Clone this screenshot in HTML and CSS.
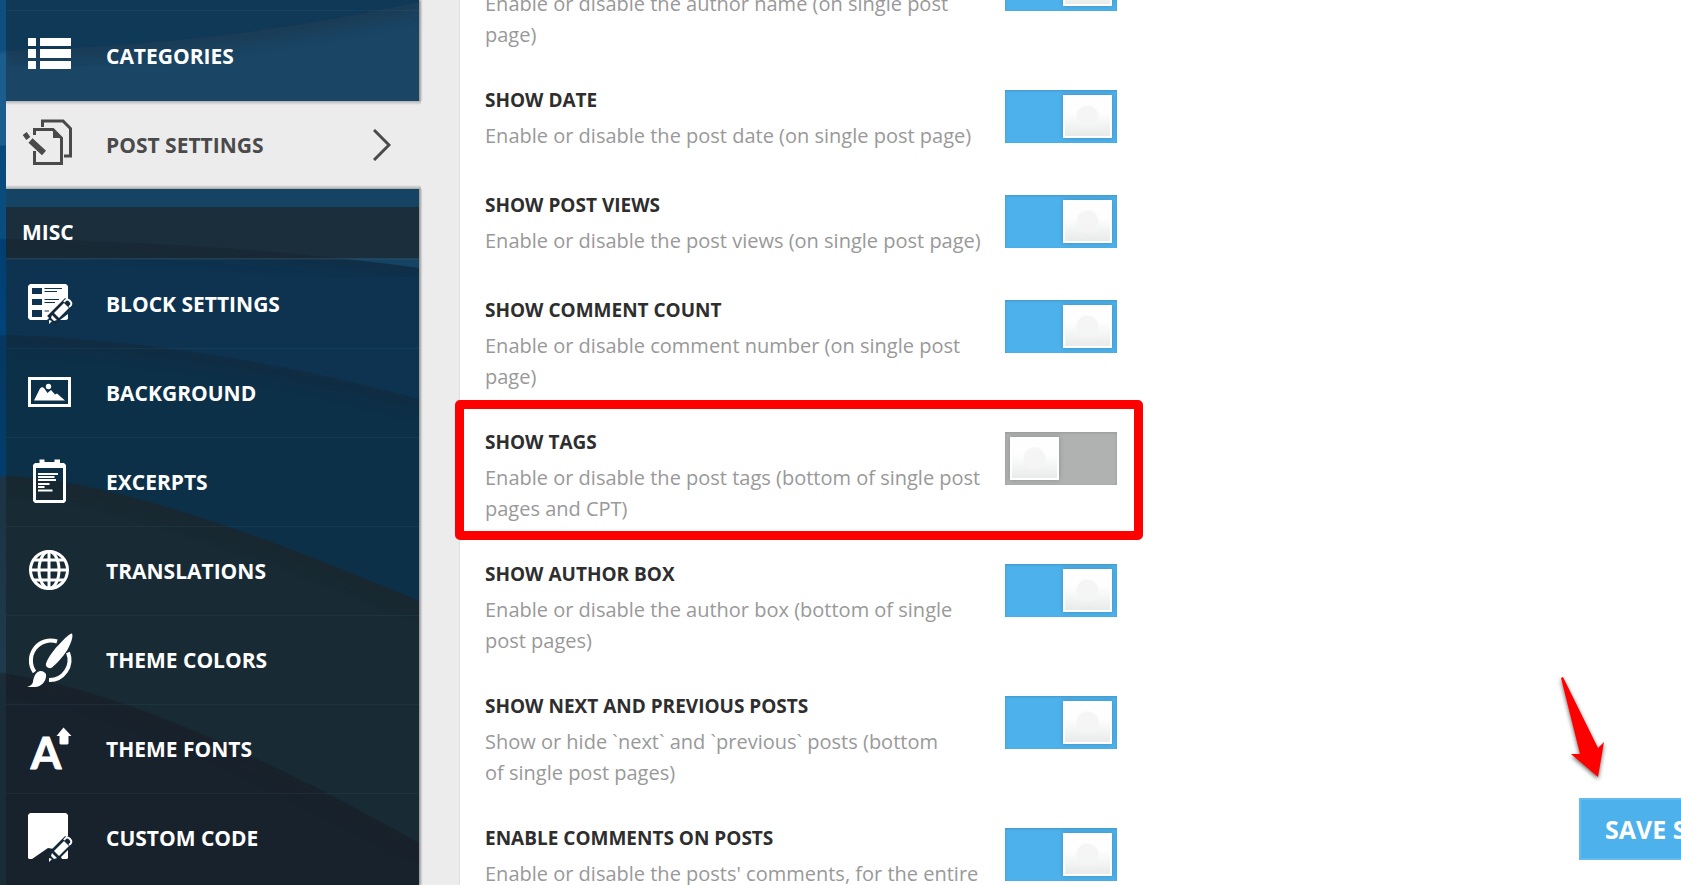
FILE: index.html
```html
<!DOCTYPE html>
<html lang="en">
<head>
    <meta charset="UTF-8">
    <meta name="viewport" content="width=device-width, initial-scale=1.0">
    <title>Theme Panel - Post Settings</title>
    <link rel="stylesheet" href="styles.css">
</head>
<body>
    <svg class="symbols" aria-hidden="true">
        <symbol id="pencil" viewBox="0 0 26 26">
            <path class="pencil-edge" d="M4 22L22 4" />
            <path d="M7 15L17 5l5 5L12 20z" />
            <path d="M5 17l5 5-3 1-3-3zM2 22l3 1-3 3z" />
            <path class="pencil-end" d="M17 4c2-3 4-3 6-1s2 4-1 6" />
        </symbol>
    </svg>

    <div class="container">
        <aside class="sidebar">
            <svg class="waves" viewBox="0 0 413 885" preserveAspectRatio="none" aria-hidden="true">
                <defs>
                    <filter id="soft" x="-10%" y="-30%" width="120%" height="160%"><feGaussianBlur stdDeviation="8" /></filter>
                    <clipPath id="c1"><path d="M0 51Q220 45 413 2V240H0z" /></clipPath>
                    <clipPath id="c2"><path d="M0 239Q220 242 413 268V885H0z" /></clipPath>
                    <clipPath id="c3"><path d="M0 335Q200 342 413 399V885H0z" /></clipPath>
                    <clipPath id="c4"><path d="M0 476Q130 480 413 601V885H0z" /></clipPath>
                    <clipPath id="c5"><path d="M0 674Q150 695 413 843V885H0z" /></clipPath>
                </defs>
                <rect width="413" height="885" fill="#103857" />
                <g clip-path="url(#c1)">
                    <rect width="413" height="885" fill="#1a4564" />
                    <path class="wave-shade" d="M0 51Q220 45 413 2" />
                </g>
                <rect y="188" width="413" height="90" fill="#144364" />
                <g clip-path="url(#c2)">
                    <rect width="413" height="885" fill="#0d3350" />
                    <path class="wave-shade" d="M0 239Q220 242 413 268" />
                </g>
                <g clip-path="url(#c3)">
                    <rect width="413" height="885" fill="#0d3049" />
                    <path class="wave-shade" d="M0 335Q200 342 413 399" />
                </g>
                <g clip-path="url(#c4)">
                    <rect width="413" height="885" fill="#182a33" />
                    <path class="wave-shade" d="M0 476Q130 480 413 601" />
                </g>
                <g clip-path="url(#c5)">
                    <rect width="413" height="885" fill="#18222c" />
                    <path class="wave-shade" d="M0 674Q150 695 413 843" />
                </g>
            </svg>

            <nav class="menu">
                <a href="#categories" class="menu-item">
                    <svg class="icon" viewBox="0 0 54 54">
                        <path d="M6 9h8v8H6zM18 9h31v8H18zM6 20h8v9H6zM18 20h31v9H18zM6 32h8v8H6zM18 32h31v8H18z" />
                    </svg>
                    Categories
                </a>
                <a href="#post-settings" class="menu-item active">
                    <svg class="icon line" viewBox="0 0 54 54">
                        <path d="M20.500 9V3H41l7.500 7.500V38H42" />
                        <path d="M12.500 17v-5.500H31l8.500 8.500v25.500h-27V33" />
                        <path class="solid" d="M31 11v9h9z" />
                        <path class="thick" d="M8.500 22.500L22 35M2.500 19.500l4-3" />
                    </svg>
                    Post Settings
                    <svg class="chevron" viewBox="0 0 18 32"><path d="M1 1l15 15L1 31" /></svg>
                </a>
            </nav>

            <h2 class="menu-heading">Misc</h2>

            <nav class="menu">
                <a href="#block-settings" class="menu-item">
                    <svg class="icon" viewBox="0 0 54 54">
                        <path fill-rule="evenodd" d="M8 7h36l2 2v14L25 43H8l-2-2V9zM10 11v6h10v-6zM10 22v6h10v-6zM10 33v7h10v-7z" />
                        <path class="rules" d="M22.500 11.500H40M22.500 14.500H35M22.500 22.500H37M22.500 25.500H33M22.500 34H27" />
                        <path d="M46 37v5l-2 1h-6z" />
                        <use href="#pencil" x="25" y="21" width="26" height="26" />
                    </svg>
                    Block Settings
                </a>
                <a href="#background" class="menu-item">
                    <svg class="icon" viewBox="0 0 54 54">
                        <path fill-rule="evenodd" d="M6 11h43v30H6zM9 14v24h37V14z" />
                        <path d="M12 34.500l6-12 2-1.500 2 1 3.500 5 3.500-3 4 4.500 2-1 8 7z" />
                        <circle cx="26.500" cy="20.500" r="2.700" />
                    </svg>
                    Background
                </a>
                <a href="#excerpts" class="menu-item">
                    <svg class="icon" viewBox="0 0 54 54">
                        <path fill-rule="evenodd" d="M17.500 4.500h5V7h10V4.500h5.500V8h4l2 2v36l-2 2H13l-2-2V10l2-2h4.500zM14 13v32h27V13z" />
                        <path class="lines" d="M16 19h20M16 22h16.500M16 25h18M16 29h11.500M16 32h6.500M16 35.500h14.500" />
                    </svg>
                    Excerpts
                </a>
                <a href="#translations" class="menu-item">
                    <svg class="icon line" viewBox="0 0 54 54">
                        <circle cx="27" cy="26" r="18.500" />
                        <ellipse cx="27" cy="26" rx="10" ry="18.500" />
                        <path d="M27 7v38M9 26h36M12 16h30M12 36h30" />
                    </svg>
                    Translations
                </a>
                <a href="#theme-colors" class="menu-item">
                    <svg class="icon" viewBox="0 0 54 54">
                        <path class="ring" d="M35 8.500A20 20 0 0 0 12.500 39M46 19.500A20 20 0 0 1 27 47" />
                        <path d="M50 .5c1.500 3-1 10-5 17-4 6-10 13-15 17-3 2-7-1-6-4 3-8 9-15 14-20C43 5 47 1 50 .5z" />
                        <path d="M13 42c3-5 8-5 11-1 1 7-5 13-11 13H5c3-1 5-2 6-5 0-2 1-5 2-7z" />
                    </svg>
                    Theme Colors
                </a>
                <a href="#theme-fonts" class="menu-item">
                    <svg class="icon" viewBox="0 0 54 54">
                        <text class="letter" x="24" y="47" text-anchor="middle">A</text>
                        <path d="M41.500 5.500L49.500 14h-3v7.500l-1 1h-7l-1-1V14h-3z" />
                    </svg>
                    Theme Fonts
                </a>
                <a href="#custom-code" class="menu-item">
                    <svg class="icon" viewBox="0 0 54 54">
                        <path d="M8 2h36l2 2v21L32 38l-6-1-16 11H7l-1-1V4z" />
                        <path d="M46 39v8l-1 1h-5l-1-2z" />
                        <use href="#pencil" x="25" y="25" width="26" height="26" />
                    </svg>
                    Custom Code
                </a>
            </nav>
        </aside>

        <main class="content">
            <div class="option">
                <div class="option-text">
                    <label for="authorName">Show Author Name</label>
                    <p>Enable or disable the author name (on single post page)</p>
                </div>
                <input type="checkbox" class="toggle" id="authorName" checked>
            </div>
            <div class="option">
                <div class="option-text">
                    <label for="date">Show Date</label>
                    <p>Enable or disable the post date (on single post page)</p>
                </div>
                <input type="checkbox" class="toggle" id="date" checked>
            </div>
            <div class="option">
                <div class="option-text">
                    <label for="views">Show Post Views</label>
                    <p>Enable or disable the post views (on single post page)</p>
                </div>
                <input type="checkbox" class="toggle" id="views" checked>
            </div>
            <div class="option">
                <div class="option-text">
                    <label for="commentCount">Show Comment Count</label>
                    <p>Enable or disable comment number (on single post page)</p>
                </div>
                <input type="checkbox" class="toggle" id="commentCount" checked>
            </div>
            <div class="option highlighted">
                <div class="option-text">
                    <label for="tags">Show Tags</label>
                    <p>Enable or disable the post tags (bottom of single post pages and CPT)</p>
                </div>
                <input type="checkbox" class="toggle" id="tags">
            </div>
            <div class="option">
                <div class="option-text">
                    <label for="authorBox">Show Author Box</label>
                    <p>Enable or disable the author box (bottom of single post pages)</p>
                </div>
                <input type="checkbox" class="toggle" id="authorBox" checked>
            </div>
            <div class="option">
                <div class="option-text">
                    <label for="nextPrev">Show Next and Previous Posts</label>
                    <p>Show or hide `next` and `previous` posts (bottom<br>of single post pages)</p>
                </div>
                <input type="checkbox" class="toggle" id="nextPrev" checked>
            </div>
            <div class="option">
                <div class="option-text">
                    <label for="comments">Enable Comments on Posts</label>
                    <p>Enable or disable the posts' comments, for the entire</p>
                </div>
                <input type="checkbox" class="toggle" id="comments" checked>
            </div>
        </main>
    </div>

    <svg class="arrow" viewBox="0 0 48 108" aria-hidden="true">
        <path d="M3 3l2-1 35 71 6-6-6 35-27-23h9z" />
    </svg>
    <button type="button" class="save-button">SAVE SETTINGS</button>
</body>
</html>
```
FILE: styles.css
```css
*, *::before, *::after {
    box-sizing: border-box;
}
body {
    margin: 0;
    font-family: "Open Sans", "Noto Sans", sans-serif;
    background: #ececec;
    overflow: hidden;
}
.symbols {
    display: none;
}
.container {
    display: flex;
    height: 100vh;
    padding-left: 6px;
    overflow: hidden;
    /* page background that shows left of the menu */
    background: linear-gradient(180deg, #0f4f7f 50px, #1b5d8c 55px, #1b5d8c 145px, #07497a 146px, #0a4e80 238px, #003e70 240px, #00447a 334px, #043860 336px, #033d6d 475px, #1c3444 478px, #1e3a4c 672px, #192c38 674px) 0 0 / 6px 100% no-repeat;
}

/* Sidebar */
.sidebar {
    position: relative;
    flex: 0 0 413px;
    box-shadow: 2px 0 2px rgba(0, 0, 0, 0.35);
    padding-top: 10px;
}
.waves {
    position: absolute;
    top: 0;
    left: 0;
    width: 100%;
    height: 100%;
}
.wave-shade {
    fill: none;
    stroke: #1a222a;
    stroke-width: 14px;
    opacity: 0.35;
    filter: url(#soft);
}
.menu, .menu-heading {
    position: relative;
}
.menu-item {
    display: flex;
    align-items: center;
    gap: 30px;
    height: 89px;
    padding-left: 16px;
    border-top: 1px solid rgba(90, 150, 190, 0.09);
    color: #fff;
    font-size: 21px;
    font-weight: 700;
    text-transform: uppercase;
    text-decoration: none;
}
.menu-item:first-child {
    height: 91px;
}
.menu-heading + .menu .menu-item:first-child {
    height: 89px;
}
.menu-item.active {
    height: 88px;
    margin-right: -5px;
    padding-right: 33px;
    border-top: 0;
    background: linear-gradient(180deg, #b4b4b4, #ececec 4px, #ececec 84px, #a8a8a8) 0 0 / 415px 100% no-repeat #ececec;
    color: #4a4a4a;
}
.menu-heading {
    margin: 18px 0 0;
    padding-left: 16px;
    background: rgba(28, 39, 47, 0.75);
    border-bottom: 1px solid rgba(90, 150, 190, 0.2);
    color: #fff;
    font-size: 21px;
    font-weight: 700;
    line-height: 51px;
    text-transform: uppercase;
}

/* Icons */
.icon {
    flex: none;
    width: 54px;
    height: 54px;
    fill: currentColor;
}
.icon.line {
    fill: none;
    stroke: currentColor;
    stroke-width: 3px;
}
.icon .solid {
    fill: currentColor;
    stroke: none;
}
.icon .thick {
    stroke-width: 6px;
}
.icon .rules {
    stroke: #0d3350;
    stroke-width: 1px;
}
.icon .lines {
    stroke: currentColor;
    stroke-width: 2px;
}
.icon .ring {
    fill: none;
    stroke: currentColor;
    stroke-width: 4px;
}
.icon .letter {
    font: 700 44px "Lato", "Open Sans", sans-serif;
    stroke: currentColor;
    stroke-width: 1px;
    stroke-linejoin: round;
}
.pencil-edge {
    fill: none;
    stroke: #14283a;
    stroke-width: 11px;
}
.pencil-end {
    fill: none;
    stroke: currentColor;
    stroke-width: 2px;
}
.chevron {
    width: 18px;
    height: 32px;
    margin-left: auto;
    fill: none;
    stroke: currentColor;
    stroke-width: 3px;
}

/* Options */
.content {
    flex: 1;
    margin-left: 40px;
    padding-left: 25px;
    background: #fff;
    border-left: 1px solid #e0e0e0;
}
.option {
    position: relative;
    display: grid;
    grid-template-columns: 496px 112px;
    gap: 24px;
    align-items: start;
    min-height: 105px;
    padding-bottom: 40px;
}
.option:first-child {
    margin-top: -42px;
}
.option-text label {
    display: block;
    font-size: 19px;
    font-weight: 700;
    line-height: 20px;
    color: #2e2e2e;
    text-transform: uppercase;
}
.option-text p {
    margin: 10px 0 0;
    font-size: 20px;
    line-height: 31px;
    color: #999;
}
.option.highlighted::after {
    content: "";
    position: absolute;
    top: -32px;
    left: -30px;
    width: 688px;
    height: 140px;
    border: 9px solid #f00;
    border-radius: 5px;
}
.toggle {
    appearance: none;
    width: 112px;
    height: 53px;
    margin: 0;
    padding: 5px;
    background: #b0b2b2;
    box-shadow: inset 0 1px 3px rgba(0, 0, 0, 0.15);
    cursor: pointer;
}
.toggle::before {
    content: "";
    display: block;
    width: 49px;
    height: 43px;
    border: 2px solid #fff;
    background: radial-gradient(circle at 50% 50%, #f5f5f5 10px, transparent 12px), linear-gradient(180deg, #fefefe 40%, #e9ebeb);
    box-shadow: 0 0 5px rgba(0, 0, 0, 0.2);
}
.toggle:checked {
    background: #4db2ec;
}
.toggle:checked::before {
    margin-left: auto;
}

/* Save */
.arrow {
    position: fixed;
    right: 75px;
    bottom: 102px;
    width: 48px;
    height: 108px;
    fill: #f00;
    filter: drop-shadow(0 2px 2px rgba(0, 0, 0, 0.6));
}
.save-button {
    position: fixed;
    right: -138px;
    bottom: 25px;
    width: 240px;
    height: 62px;
    padding: 0 24px;
    border: 2px solid #63bbee;
    background: #4db2ec;
    color: #fff;
    font-family: inherit;
    font-size: 25px;
    font-weight: 700;
    text-align: left;
    cursor: pointer;
}
```
